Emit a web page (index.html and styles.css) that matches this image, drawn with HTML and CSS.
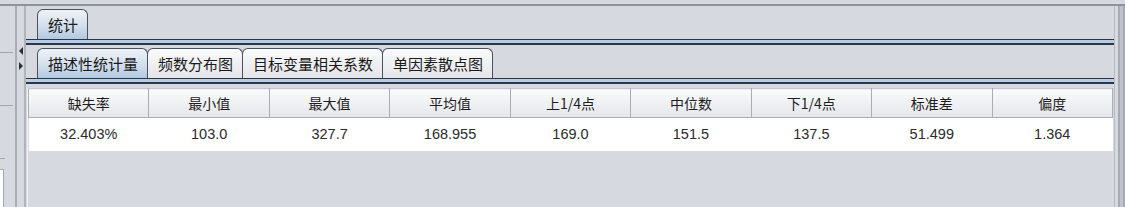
FILE: index.html
```html
<!DOCTYPE html>
<html lang="zh">
<head>
    <meta charset="UTF-8">
    <title>统计</title>
    <link rel="stylesheet" href="styles.css">
</head>
<body>
    <div class="topbar"></div>
    <div class="frame">
        <div class="left-panel">
            <div class="tick tick-first"></div>
            <div class="tick"></div>
            <div class="tick tick-short"></div>
            <div class="side-box"></div>
        </div>
        <div class="splitter">
            <span class="arrow arrow-left"></span>
            <span class="arrow arrow-right"></span>
        </div>
        <div class="main">
            <div class="tab-row outer-row">
                <div class="tab selected">统计</div>
            </div>
            <div class="band"></div>
            <div class="tab-row inner-row">
                <div class="tab selected">描述性统计量</div>
                <div class="tab">频数分布图</div>
                <div class="tab">目标变量相关系数</div>
                <div class="tab">单因素散点图</div>
            </div>
            <div class="band"></div>
            <div class="table-wrap">
                <table class="stats">
                    <thead>
                        <tr>
                            <th>缺失率</th>
                            <th>最小值</th>
                            <th>最大值</th>
                            <th>平均值</th>
                            <th>上1/4点</th>
                            <th>中位数</th>
                            <th>下1/4点</th>
                            <th>标准差</th>
                            <th>偏度</th>
                        </tr>
                    </thead>
                    <tbody>
                        <tr>
                            <td>32.403%</td>
                            <td>103.0</td>
                            <td>327.7</td>
                            <td>168.955</td>
                            <td>169.0</td>
                            <td>151.5</td>
                            <td>137.5</td>
                            <td>51.499</td>
                            <td>1.364</td>
                        </tr>
                    </tbody>
                </table>
            </div>
        </div>
        <div class="right-edge"></div>
    </div>
</body>
</html>
```

FILE: styles.css
```css
* { margin: 0; padding: 0; box-sizing: border-box; }
body {
    font-family: "Liberation Sans", "Noto Sans CJK SC", sans-serif;
    background-color: #d6d9df;
    width: 1125px;
    height: 207px;
    overflow: hidden;
    color: #1e1e1e;
}
.topbar { height: 6px; border-bottom: 2px solid #8f939a; }
.frame { display: flex; height: 201px; }

/* left collapsed panel */
.left-panel { width: 15px; flex-shrink: 0; display: flex; flex-direction: column; }
.tick { height: 1px; width: 13px; background-color: #a2a6ad; margin-top: 52px; }
.tick-first { margin-top: 46px; }
.tick-short { width: 5px; }
.side-box {
    flex: 1; width: 4px; margin-top: 10px;
    background-color: #fff; border-top: 1px solid #a2a6ad; border-right: 1px solid #a2a6ad;
}

.splitter {
    width: 11px; flex-shrink: 0;
    border-left: 2px solid #a9adb4;
    border-right: 2px solid #b0b4bb;
    display: flex; flex-direction: column; align-items: center;
}
.arrow { width: 0; height: 0; border-top: 4px solid transparent; border-bottom: 4px solid transparent; }
.arrow-left { border-right: 4px solid #2a2f36; margin-top: 41px; }
.arrow-right { border-left: 4px solid #2a2f36; margin-top: 7px; }

/* main tabbed area */
.main { flex: 1; display: flex; flex-direction: column; }
.tab-row { display: flex; padding-left: 11px; }
.outer-row { padding-top: 3px; }
.inner-row { padding-top: 3px; }
.tab {
    height: 30px; padding: 0 9px 0 10px;
    font-family: "Noto Sans CJK SC", sans-serif; font-size: 15px;
    line-height: 29px; color: #1a1a1a;
    border: 1px solid #4b525d; border-bottom: none;
    border-radius: 6px 6px 0 0;
    background: linear-gradient(#fbfbfc, #e3e5e9);
}
.tab + .tab { margin-left: -1px; }
.tab.selected { background: linear-gradient(#eef2f7 0%, #d3dfec 55%, #b2c9e1 100%); }
.band {
    height: 6px;
    border-top: 1px solid #2d3744; border-bottom: 2px solid #2d3744;
    background-color: #b7cde5;
}

.table-wrap {
    flex: 1; margin-top: 4px; margin-left: 1px;
    border-left: 1px solid #f2f3f5;
}
.stats { width: 1085px; border-collapse: collapse; table-layout: fixed; }
.stats th {
    height: 29px; font-weight: normal; font-size: 14px;
    font-family: "Noto Sans CJK SC", sans-serif; color: #1e1e1e;
    background: linear-gradient(#fafbfc, #e4e6ea);
    border: 1px solid #a9adb4; border-top-color: #c3c6cc;
}
.stats td {
    height: 33px; text-align: center; font-size: 14.5px; color: #2b2b2b;
    background-color: #fff;
}

.right-edge {
    width: 11px; flex-shrink: 0;
    border-left: 1px solid #b9bcc3;
    background: linear-gradient(90deg, #d6d9df 0 3px, #a6aab1 3px 5px, #c0c3c9 5px 8px, #a6aab1 8px 10px, #d6d9df 10px);
}
```
